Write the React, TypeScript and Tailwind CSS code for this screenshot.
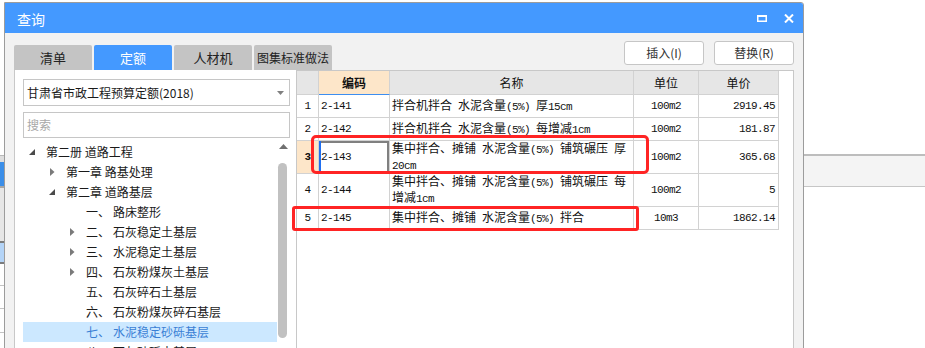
import React from "react";

const MONO = "font-['Liberation_Mono',monospace] text-[11px] tracking-[-0.6px] whitespace-pre";

function Mixed({ s }: { s: string }) {
  const parts = s.split(/([\x20-\x7E]+)/).filter((p) => p.length > 0);
  return (
    <>
      {parts.map((p, i) =>
        /^[\x20-\x7E]+$/.test(p) ? (
          <span key={i} className={MONO}>
            {p}
          </span>
        ) : (
          <span key={i}>{p}</span>
        )
      )}
    </>
  );
}

type TreeItem = { lvl: number; tri?: "down" | "right"; num?: string; label: string; sel?: boolean };

const tree: TreeItem[] = [
  { lvl: 0, tri: "down", label: "第二册 道路工程" },
  { lvl: 1, tri: "right", label: "第一章 路基处理" },
  { lvl: 1, tri: "down", label: "第二章 道路基层" },
  { lvl: 2, num: "一、", label: "路床整形" },
  { lvl: 2, tri: "right", num: "二、", label: "石灰稳定土基层" },
  { lvl: 2, tri: "right", num: "三、", label: "水泥稳定土基层" },
  { lvl: 2, tri: "right", num: "四、", label: "石灰粉煤灰土基层" },
  { lvl: 2, num: "五、", label: "石灰碎石土基层" },
  { lvl: 2, num: "六、", label: "石灰粉煤灰碎石基层" },
  { lvl: 2, num: "七、", label: "水泥稳定砂砾基层", sel: true },
  { lvl: 2, num: "八、", label: "石灰砂砾土基层" },
];

const rows = [
  { n: "1", code: "2-141", name: ["拌合机拌合 水泥含量(5%) 厚15cm"], unit: "100m2", price: "2919.45", h: "h-[23px]" },
  { n: "2", code: "2-142", name: ["拌合机拌合 水泥含量(5%) 每增减1cm"], unit: "100m2", price: "181.87", h: "h-[23px]" },
  { n: "3", code: "2-143", name: ["集中拌合、摊铺 水泥含量(5%) 铺筑碾压 厚", "20cm"], unit: "100m2", price: "365.68", h: "h-[33px]", sel: true },
  { n: "4", code: "2-144", name: ["集中拌合、摊铺 水泥含量(5%) 铺筑碾压 每", "增减1cm"], unit: "100m2", price: "5", h: "h-[33px]" },
  { n: "5", code: "2-145", name: ["集中拌合、摊铺 水泥含量(5%) 拌合"], unit: "10m3", price: "1862.14", h: "h-[23px]" },
];

function Tri({ dir }: { dir: "down" | "right" }) {
  if (dir === "down")
    return (
      <svg width="6" height="6" viewBox="0 0 6 6">
        <polygon points="6,0 6,6 0,6" fill="#4a4a4a" />
      </svg>
    );
  return (
    <svg width="5" height="8" viewBox="0 0 5 8" className="ml-[1px]">
      <polygon points="0,0 4.5,4 0,8" fill="#7a7a7a" />
    </svg>
  );
}

const cellB = "border-r border-b border-[#d2d2d2]";

export default function App() {
  return (
    <div className="relative w-[925px] h-[348px] overflow-hidden bg-white flex font-['Noto_Sans_CJK_SC',sans-serif] text-[12px] text-[#1a1a1a]">
      {/* background app, left edge */}
      <div className="w-[4px] shrink-0 flex flex-col">
        <div className="h-[155px] bg-white" />
        <div className="h-[7px] bg-[#dedede] border-t border-[#b8b8b8]" />
        <div className="h-[24px] bg-[#3b8ee8]" />
        <div className="h-[2px] bg-[#a6a6a6]" />
        <div className="h-[53px] bg-[#e6e6e6]" />
        <div className="h-[2px] bg-[#7c7c7c]" />
        <div className="h-[19px] bg-[#b4d4f7]" />
        <div className="h-[2px] bg-[#7c7c7c]" />
        <div className="h-[22px] bg-white border-b border-[#c4c4c4]" />
        <div className="h-[23px] bg-white border-b border-[#c4c4c4]" />
        <div className="h-[24px] bg-white border-b border-[#c4c4c4]" />
        <div className="flex-1 bg-white" />
      </div>

      {/* dialog */}
      <div className="mt-[2px] w-[800px] h-[370px] shrink-0 border border-[#9c9c9c] rounded-tr-[3px] bg-[#f2f2f2] flex flex-col">
        <div className="h-[30px] bg-[#4499ff] rounded-tr-[2px] flex items-center pl-[12px] pr-[9px] text-white text-[14px]">
          <span className="mt-[2px]">查询</span>
          <div className="ml-auto flex items-center gap-[17px]">
            <svg width="10" height="7" viewBox="0 0 10 7">
              <rect x="0.75" y="0.75" width="8.5" height="5.5" fill="none" stroke="#fff" strokeWidth="1.5" />
              <rect x="0" y="0" width="10" height="2" fill="#fff" />
            </svg>
            <svg width="10" height="9" viewBox="0 0 10 9">
              <path d="M1 0.5 L9 8.5 M9 0.5 L1 8.5" stroke="#fff" strokeWidth="2" />
            </svg>
          </div>
        </div>

        <div className="flex-1 flex flex-col pt-[8px] pl-[9px] pr-[9px]">
          <div className="h-[29px] flex shrink-0">
            <div className="flex items-end gap-[2px]">
              <div className="w-[78px] h-[25px] rounded-t-[2px] bg-[#c4c4c4] text-[#222] flex items-center justify-center text-[13px]">清单</div>
              <div className="w-[78px] h-[25px] rounded-t-[2px] bg-[#4499ff] text-white flex items-center justify-center text-[13px]">定额</div>
              <div className="w-[78px] h-[25px] rounded-t-[2px] bg-[#c4c4c4] text-[#222] flex items-center justify-center text-[13px]">人材机</div>
              <div className="w-[78px] h-[25px] rounded-t-[2px] bg-[#c4c4c4] text-[#222] flex items-center justify-center text-[12px] whitespace-nowrap overflow-hidden">图集标准做法</div>
            </div>
            <div className="ml-auto flex items-start gap-[10px]">
              <div className="w-[80px] h-[24px] rounded-[3px] border border-[#c6c6c6] bg-white flex items-center justify-center text-[#333]">插入(I)</div>
              <div className="w-[80px] h-[24px] rounded-[3px] border border-[#c6c6c6] bg-white flex items-center justify-center text-[#333]">替换(R)</div>
            </div>
          </div>

          <div className="flex-1 flex">
            {/* left panel */}
            <div className="w-[282px] shrink-0 border-l border-[#c8c8c8] bg-white flex flex-col pl-[8px] pr-[6px] pt-[9px]">
              <div className="h-[27px] border border-[#c6c6c6] flex items-center pl-[3px] pr-[5px]">
                <span>甘肃省市政工程预算定额(2018)</span>
                <svg width="7" height="4" viewBox="0 0 7 4" className="ml-auto">
                  <polygon points="0,0 7,0 3.5,4" fill="#808080" />
                </svg>
              </div>
              <div className="mt-[6px] h-[26px] border border-[#c6c6c6] flex items-center pl-[3px] text-[#a8a8a8]">搜索</div>
              <div className="mt-[4px] flex flex-1">
                <div className="w-[254px] flex flex-col">
                  {tree.map((t, i) => (
                    <div
                      key={i}
                      className={
                        "h-[20px] flex items-center whitespace-nowrap " +
                        (t.lvl === 0 ? "pl-[6px] " : t.lvl === 1 ? "pl-[26px] " : "pl-[46px] ") +
                        (t.sel ? "bg-[#cce8ff] text-[#3a7fd5]" : "")
                      }
                    >
                      <div className="w-[17px] flex items-center">{t.tri ? <Tri dir={t.tri} /> : null}</div>
                      {t.num ? <span className="w-[27px]">{t.num}</span> : null}
                      <span>{t.label}</span>
                    </div>
                  ))}
                </div>
                <div className="w-[13px] flex flex-col items-start">
                  <svg width="9" height="5" viewBox="0 0 9 5" className="ml-[2px] mt-[2px]">
                    <polygon points="0,5 9,5 4.5,0" fill="#707070" />
                  </svg>
                  <div className="ml-[1px] mt-[14px] w-[9px] h-[175px] rounded-full bg-[#c1c1c1]" />
                </div>
              </div>
            </div>

            {/* right panel */}
            <div className="flex-1 border-l border-r border-t border-[#c8c8c8] bg-white flex flex-col">
              <div className="flex h-[24px] text-[#111]">
                <div className={"w-[22px] bg-[#e6e6e6] " + cellB} />
                <div className="w-[71px] bg-[#fde6c9] border-r border-[#d2d2d2] border-b border-b-[#3d8ef0] flex items-center justify-center font-bold">编码</div>
                <div className={"w-[244px] bg-[#e6e6e6] flex items-center justify-center " + cellB}>名称</div>
                <div className={"w-[65px] bg-[#e6e6e6] flex items-center justify-center " + cellB}>单位</div>
                <div className={"w-[80px] bg-[#e6e6e6] flex items-center justify-center " + cellB}>单价</div>
              </div>
              {rows.map((r) => (
                <div key={r.n} className={"flex text-[#111] " + r.h}>
                  <div className={"w-[22px] flex items-center justify-center " + cellB + (r.sel ? " bg-[#fde6c9] font-bold" : "")}>
                    <span className={MONO + (r.sel ? " font-bold" : "")}>{r.n}</span>
                  </div>
                  <div
                    className={
                      "w-[71px] flex items-center pl-[2px] " +
                      cellB +
                      (r.sel ? " shadow-[inset_2px_0_0_#1f6ff0,inset_0_0_0_2px_#808080]" : "")
                    }
                  >
                    <span className={MONO}>{r.code}</span>
                  </div>
                  <div className={"w-[244px] flex flex-col justify-center pl-[2px] leading-[14px] whitespace-nowrap " + cellB}>
                    {r.name.map((l, i) => (
                      <div key={i}>
                        <Mixed s={l} />
                      </div>
                    ))}
                  </div>
                  <div className={"w-[65px] flex items-center justify-center " + cellB}>
                    <span className={MONO}>{r.unit}</span>
                  </div>
                  <div className={"w-[80px] flex items-center justify-end pr-[3px] " + cellB}>
                    <span className={MONO}>{r.price}</span>
                  </div>
                </div>
              ))}
            </div>
          </div>
        </div>
      </div>

      {/* background app, right side */}
      <div className="flex-1 flex flex-col">
        <div className="h-[154px] bg-white" />
        <div className="h-[33px] bg-[#f4f4f4] border-t-2 border-[#bdbdbd] border-b border-b-[#c6c6c6]" />
        <div className="flex-1 bg-white" />
      </div>

      {/* red annotation boxes */}
      <div className="absolute left-[311px] top-[135px] w-[338px] h-[39px] border-[3px] border-[#ff2424] rounded-[5px]" />
      <div className="absolute left-[292px] top-[206px] w-[347px] h-[25px] border-[3px] border-[#ff2424] rounded-[3px]" />
    </div>
  );
}
